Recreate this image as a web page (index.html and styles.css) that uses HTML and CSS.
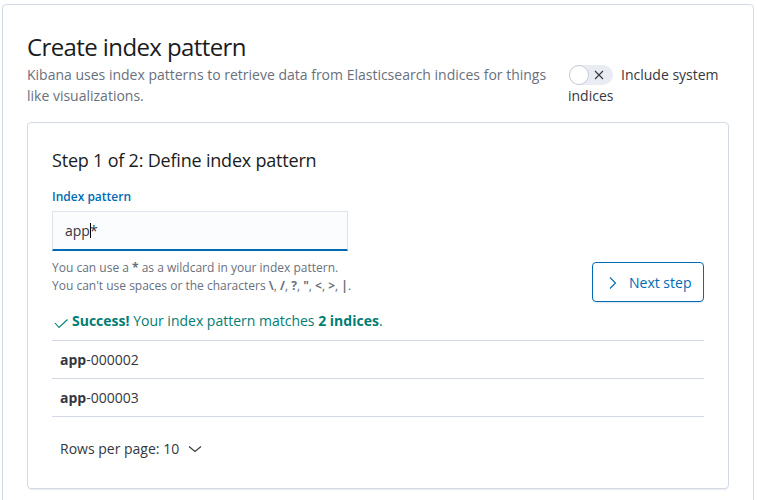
FILE: index.html
```html
<!DOCTYPE html>
<html lang="en">
<head>
<meta charset="utf-8">
<title>Create index pattern</title>
<link rel="stylesheet" href="styles.css">
</head>
<body>
<div class="page-panel">
  <div class="header">
    <div class="header-main">
      <h1 class="title">Create index pattern</h1>
      <p class="subtitle">Kibana uses index patterns to retrieve data from Elasticsearch indices for things like visualizations.</p>
    </div>
    <div class="header-side">
      <span class="switch"><span class="knob"></span><svg class="switch-x" width="10" height="10" viewBox="0 0 10 10"><path d="M1 1L9 9M9 1L1 9" stroke="#343741" stroke-width="1.1" fill="none"/></svg></span><span class="switch-label">Include system indices</span>
    </div>
  </div>

  <div class="step-panel">
    <h2 class="step-title">Step 1 of 2: Define index pattern</h2>
    <div class="form-row">
      <div class="form-field">
        <label class="field-label">Index pattern</label>
        <div class="text-input">app<span class="caret"></span>*</div>
        <div class="help">
          <div>You can use a <strong>*</strong> as a wildcard in your index pattern.</div>
          <div>You can't use spaces or the characters <strong>\</strong>, <strong>/</strong>, <strong>?</strong>, <strong>"</strong>, <strong>&lt;</strong>, <strong>&gt;</strong>, <strong>|</strong>.</div>
        </div>
      </div>
      <button class="next-btn"><svg width="16" height="16" viewBox="0 0 16 16"><polyline points="5,3.5 10.5,9 5,14.5" fill="none" stroke="#006bb4" stroke-width="1.1"/></svg><span>Next step</span></button>
    </div>

    <div class="success"><svg width="16" height="16" viewBox="0 0 16 16"><polyline points="3,10 7,14.5 15.5,6.5" fill="none" stroke="#017d73" stroke-width="1.1"/></svg><span><strong>Success!</strong> Your index pattern matches <strong>2 indices</strong>.</span></div>

    <div class="index-table">
      <div class="index-row"><strong>app</strong>-000002</div>
      <div class="index-row"><strong>app</strong>-000003</div>
    </div>

    <div class="pagination">
      <button class="rows-btn"><span>Rows per page: 10</span><svg width="16" height="16" viewBox="0 0 16 16"><polyline points="2,6.5 8,11.5 14,6.5" fill="none" stroke="#343741" stroke-width="1.1"/></svg></button>
    </div>
  </div>
</div>
</body>
</html>
```

FILE: styles.css
```css
* { box-sizing: border-box; }

body {
  margin: 0;
  background: #ffffff;
  font-family: "Open Sans", "DejaVu Sans", sans-serif;
  color: #343741;
  font-size: 14px;
  line-height: 21px;
}

.page-panel {
  margin: 4px 3px 0 2px;
  border: 1px solid #d3dae6;
  border-radius: 4px;
  padding: 24px;
  background: #fff;
  box-shadow: 0 1px 1px -1px rgba(152,162,179,.2), 0 3px 2px -2px rgba(152,162,179,.2);
}

.header {
  display: flex;
  gap: 16px;
  align-items: flex-end;
}

.header-main {
  flex: 1 1 auto;
  min-width: 0;
}

.title {
  margin: 0;
  font-size: 24px;
  line-height: 35px;
  font-weight: 400;
  letter-spacing: -0.025em;
  color: #1a1c21;
}

.subtitle {
  margin: 0;
  font-size: 14px;
  line-height: 21px;
  color: #69707d;
}

.header-side {
  flex: 0 0 161px;
  font-size: 14px;
  line-height: 21px;
  color: #343741;
}

.switch {
  display: inline-block;
  position: relative;
  width: 44px;
  height: 20px;
  border-radius: 10px;
  background: #e9edf3;
  vertical-align: middle;
  margin-left: 1px;
  margin-right: 8px;
  margin-top: -3px;
}

.knob {
  position: absolute;
  left: 0;
  top: 0;
  width: 20px;
  height: 20px;
  border-radius: 50%;
  background: #fff;
  border: 1px solid #c5ccd7;
}

.switch-x {
  position: absolute;
  left: 25px;
  top: 5px;
}

.step-panel {
  margin-top: 16px;
  border: 1px solid #d3dae6;
  border-radius: 4px;
  padding: 24px;
  background: #fff;
  box-shadow: 0 1px 1px -1px rgba(152,162,179,.2), 0 3px 2px -2px rgba(152,162,179,.2);
}

.step-title {
  margin: 0 0 14px;
  font-size: 18px;
  line-height: 27px;
  font-weight: 400;
  letter-spacing: -0.2px;
  color: #1a1c21;
}

.form-row {
  display: flex;
  justify-content: space-between;
  align-items: flex-end;
}

.form-field {
  width: 296px;
  padding-bottom: 7px;
}

.field-label {
  display: block;
  font-size: 12px;
  line-height: 18px;
  font-weight: 600;
  color: #006bb4;
  margin-bottom: 5px;
}

.text-input {
  height: 40px;
  padding: 0 12px;
  display: flex;
  align-items: center;
  background: #fbfcfd;
  border: 1px solid #dfe4ec;
  border-bottom: 2px solid #006bb4;
  color: #343741;
  font-size: 14px;
}

.caret {
  display: inline-block;
  width: 1px;
  height: 15px;
  background: #000;
  margin-right: -1px;
}

.help {
  margin-top: 8px;
  font-size: 12px;
  line-height: 18px;
  color: #69707d;
  white-space: nowrap;
}

.help strong {
  font-weight: 700;
  color: #69707d;
}

.next-btn {
  min-width: 112px;
  height: 40px;
  padding: 0 11px 0 12px;
  display: inline-flex;
  align-items: center;
  gap: 8px;
  white-space: nowrap;
  background: #fff;
  border: 1px solid #006bb4;
  border-radius: 4px;
  color: #006bb4;
  font-family: inherit;
  font-size: 14px;
  line-height: 21px;
  box-shadow: 0 2px 2px -1px rgba(152,162,179,.3);
}

.success {
  margin-top: 8px;
  display: flex;
  align-items: center;
  gap: 4px;
  color: #017d73;
  font-size: 14px;
  line-height: 21px;
}

.success strong { font-weight: 700; }

.index-table {
  margin-top: 9px;
  border-top: 1px solid #d3dae6;
}

.index-row {
  padding: 8px;
  line-height: 21px;
  border-bottom: 1px solid #d3dae6;
  color: #343741;
}

.index-row strong {
  font-weight: 700;
}

.pagination {
  margin-top: 15px;
}

.rows-btn {
  height: 32px;
  padding: 0 8px;
  display: inline-flex;
  align-items: center;
  gap: 8px;
  background: none;
  border: none;
  color: #343741;
  font-family: inherit;
  font-size: 14px;
  line-height: 21px;
}
```
